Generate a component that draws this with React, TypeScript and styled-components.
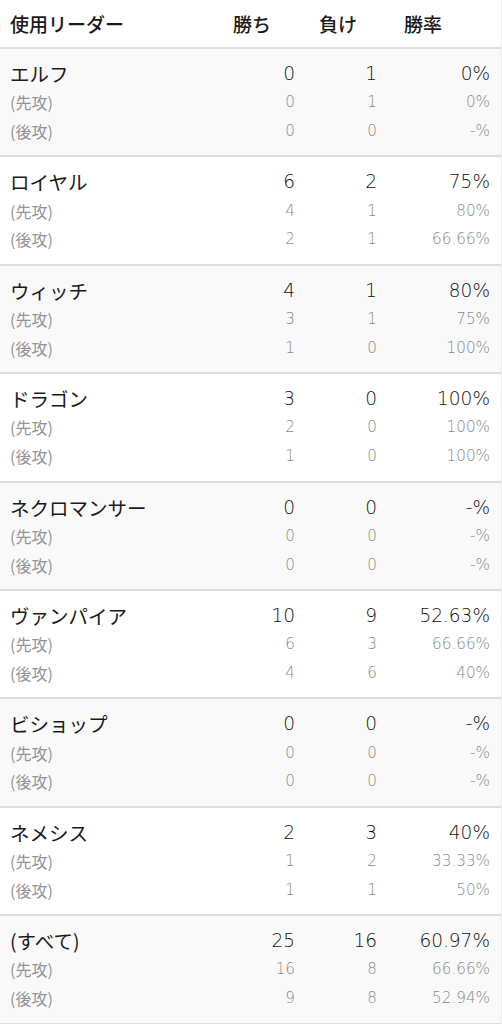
import styled, { createGlobalStyle } from "styled-components"

const GlobalStyle = createGlobalStyle`
  html, body {
    margin: 0;
    padding: 0;
    background: #ffffff;
  }
  body {
    font-family: "Noto Sans CJK JP", "Noto Sans", sans-serif;
    color: #1a1a1a;
  }
`

type Line = { win: number; lose: number; rate: string }
type Leader = { name: string; total: Line; first: Line; second: Line }

const leaders: Leader[] = [
  { name: "エルフ", total: { win: 0, lose: 1, rate: "0%" }, first: { win: 0, lose: 1, rate: "0%" }, second: { win: 0, lose: 0, rate: "-%" } },
  { name: "ロイヤル", total: { win: 6, lose: 2, rate: "75%" }, first: { win: 4, lose: 1, rate: "80%" }, second: { win: 2, lose: 1, rate: "66.66%" } },
  { name: "ウィッチ", total: { win: 4, lose: 1, rate: "80%" }, first: { win: 3, lose: 1, rate: "75%" }, second: { win: 1, lose: 0, rate: "100%" } },
  { name: "ドラゴン", total: { win: 3, lose: 0, rate: "100%" }, first: { win: 2, lose: 0, rate: "100%" }, second: { win: 1, lose: 0, rate: "100%" } },
  { name: "ネクロマンサー", total: { win: 0, lose: 0, rate: "-%" }, first: { win: 0, lose: 0, rate: "-%" }, second: { win: 0, lose: 0, rate: "-%" } },
  { name: "ヴァンパイア", total: { win: 10, lose: 9, rate: "52.63%" }, first: { win: 6, lose: 3, rate: "66.66%" }, second: { win: 4, lose: 6, rate: "40%" } },
  { name: "ビショップ", total: { win: 0, lose: 0, rate: "-%" }, first: { win: 0, lose: 0, rate: "-%" }, second: { win: 0, lose: 0, rate: "-%" } },
  { name: "ネメシス", total: { win: 2, lose: 3, rate: "40%" }, first: { win: 1, lose: 2, rate: "33.33%" }, second: { win: 1, lose: 1, rate: "50%" } },
  { name: "(すべて)", total: { win: 25, lose: 16, rate: "60.97%" }, first: { win: 16, lose: 8, rate: "66.66%" }, second: { win: 9, lose: 8, rate: "52.94%" } },
]

// name | win | lose | rate
const COLUMNS = "223px 86px 85px 1fr"

const Table = styled.div`
  width: 502px;
  border-right: 1px solid #ececec;
  box-sizing: border-box;
`

const HeaderRow = styled.div`
  display: grid;
  grid-template-columns: ${COLUMNS};
  align-items: center;
  height: 47px;
  background: #fff;
  border-bottom: 2px solid #dedede;
`

const HeadCell = styled.div`
  padding-left: 10px;
  font-size: 19px;
  font-weight: 500;
  color: #1a1a1a;
`

const Group = styled.div<{ $shaded: boolean }>`
  background: ${(p) => (p.$shaded ? "#f9f9f9" : "#ffffff")};
  padding: 10px 0;
  border-bottom: 2px solid #dedede;
`

const Row = styled.div<{ $sub?: boolean }>`
  display: grid;
  grid-template-columns: ${COLUMNS};
  align-items: center;
  height: 28.8px;
  font-size: ${(p) => (p.$sub ? "16px" : "19.5px")};
  color: ${(p) => (p.$sub ? "#949494" : "#1a1a1a")};
`

const Name = styled.div`
  padding-left: 10px;
  white-space: nowrap;
`

const Num = styled.div<{ $pr: number; $sub?: boolean }>`
  text-align: right;
  padding-right: ${(p) => p.$pr}px;
  font-family: "DejaVu Sans", "Noto Sans CJK JP", sans-serif;
  font-weight: 200;
  font-size: 0.95em;
  color: ${(p) => (p.$sub ? "#8a8a8a" : "#111111")};
`

const StatRow = ({ label, line, sub }: { label: string; line: Line; sub?: boolean }) => (
  <Row $sub={sub}>
    <Name>{label}</Name>
    <Num $pr={14} $sub={sub}>{line.win}</Num>
    <Num $pr={17} $sub={sub}>{line.lose}</Num>
    <Num $pr={11} $sub={sub}>{line.rate}</Num>
  </Row>
)

export default function App() {
  return (
    <>
      <GlobalStyle />
      <Table>
        <HeaderRow>
          <HeadCell>使用リーダー</HeadCell>
          <HeadCell>勝ち</HeadCell>
          <HeadCell>負け</HeadCell>
          <HeadCell>勝率</HeadCell>
        </HeaderRow>
        {leaders.map((l, i) => (
          <Group key={l.name} $shaded={i % 2 === 0}>
            <StatRow label={l.name} line={l.total} />
            <StatRow label="(先攻)" line={l.first} sub />
            <StatRow label="(後攻)" line={l.second} sub />
          </Group>
        ))}
      </Table>
    </>
  )
}
